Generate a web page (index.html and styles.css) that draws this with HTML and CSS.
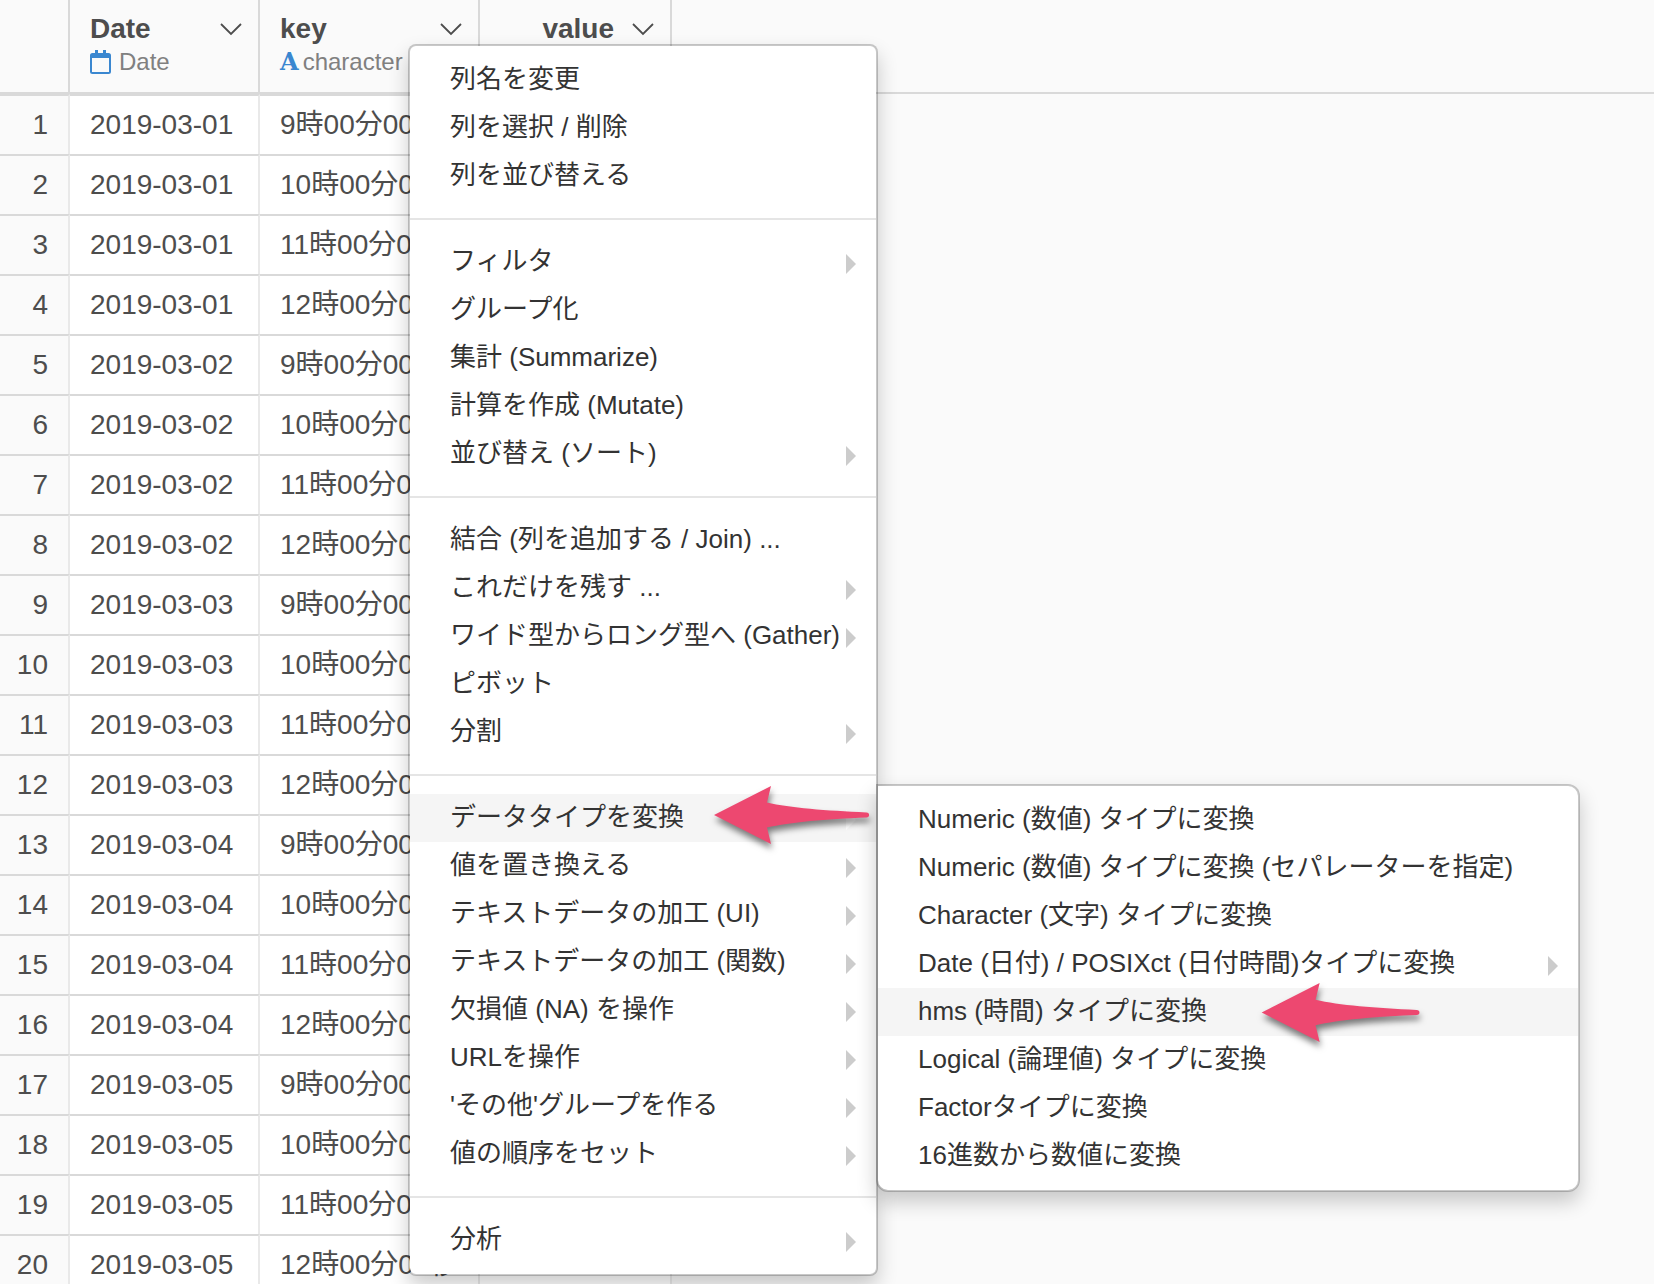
FILE: index.html
```html
<!DOCTYPE html>
<html lang="ja">
<head>
<meta charset="utf-8">
<title>データテーブル</title>
<link rel="stylesheet" href="styles.css">
</head>
<body>
<svg class="defs" aria-hidden="true">
  <symbol id="chevron" viewBox="0 0 22 14"><path d="M1 2 L11 12 L21 2" fill="none" stroke="currentColor" stroke-width="1.8"/></symbol>
  <symbol id="pointer" viewBox="0 0 156 58"><path d="M0 29 L57 0 L53 16.5 C76 22 112 24.500 152.500 26.500 C156 26.700 156 31.200 152.500 31.400 C112 33 76 36 53 41.500 L57 58 Z" fill="#ed4870"/></symbol>
</svg>
<main class="viewer">
  <table class="grid">
    <colgroup><col class="col-index"><col class="col-date"><col class="col-key"><col class="col-value"><col></colgroup>
    <thead>
      <tr>
        <th></th>
        <th>
          <div class="head"><span>Date</span><button class="toggle" type="button" aria-label="Date"><svg><use href="#chevron"/></svg></button></div>
          <div class="type"><svg class="type-date" viewBox="0 0 21 24"><path fill="#3a87d0" fill-rule="evenodd" d="M5 0h3v3h5V0h3v3h2.500a2.500 2.500 0 0 1 2.500 2.500v16a2.500 2.500 0 0 1-2.500 2.500h-16A2.500 2.500 0 0 1 0 21.500v-16A2.500 2.500 0 0 1 2.500 3H5zM2 8v14h17V8z"/></svg><span>Date</span></div>
        </th>
        <th>
          <div class="head"><span>key</span><button class="toggle" type="button" aria-label="key"><svg><use href="#chevron"/></svg></button></div>
          <div class="type type-close"><span class="type-char">A</span><span>character</span></div>
        </th>
        <th>
          <div class="head head-end"><span>value</span><button class="toggle" type="button" aria-label="value"><svg><use href="#chevron"/></svg></button></div>
        </th>
        <th class="rest"></th>
      </tr>
    </thead>
    <tbody>
      <tr><td>1</td><td>2019-03-01</td><td>9時00分00秒</td><td></td></tr>
      <tr><td>2</td><td>2019-03-01</td><td>10時00分00秒</td><td></td></tr>
      <tr><td>3</td><td>2019-03-01</td><td>11時00分00秒</td><td></td></tr>
      <tr><td>4</td><td>2019-03-01</td><td>12時00分00秒</td><td></td></tr>
      <tr><td>5</td><td>2019-03-02</td><td>9時00分00秒</td><td></td></tr>
      <tr><td>6</td><td>2019-03-02</td><td>10時00分00秒</td><td></td></tr>
      <tr><td>7</td><td>2019-03-02</td><td>11時00分00秒</td><td></td></tr>
      <tr><td>8</td><td>2019-03-02</td><td>12時00分00秒</td><td></td></tr>
      <tr><td>9</td><td>2019-03-03</td><td>9時00分00秒</td><td></td></tr>
      <tr><td>10</td><td>2019-03-03</td><td>10時00分00秒</td><td></td></tr>
      <tr><td>11</td><td>2019-03-03</td><td>11時00分00秒</td><td></td></tr>
      <tr><td>12</td><td>2019-03-03</td><td>12時00分00秒</td><td></td></tr>
      <tr><td>13</td><td>2019-03-04</td><td>9時00分00秒</td><td></td></tr>
      <tr><td>14</td><td>2019-03-04</td><td>10時00分00秒</td><td></td></tr>
      <tr><td>15</td><td>2019-03-04</td><td>11時00分00秒</td><td></td></tr>
      <tr><td>16</td><td>2019-03-04</td><td>12時00分00秒</td><td></td></tr>
      <tr><td>17</td><td>2019-03-05</td><td>9時00分00秒</td><td></td></tr>
      <tr><td>18</td><td>2019-03-05</td><td>10時00分00秒</td><td></td></tr>
      <tr><td>19</td><td>2019-03-05</td><td>11時00分00秒</td><td></td></tr>
      <tr><td>20</td><td>2019-03-05</td><td>12時00分00秒</td><td></td></tr>
    </tbody>
  </table>

  <nav class="menu menu-main">
    <ul>
      <li><button type="button">列名を変更</button></li>
      <li><button type="button">列を選択 / 削除</button></li>
      <li><button type="button">列を並び替える</button></li>
    </ul>
    <hr>
    <ul>
      <li><button type="button" class="more">フィルタ</button></li>
      <li><button type="button">グループ化</button></li>
      <li><button type="button">集計 (Summarize)</button></li>
      <li><button type="button">計算を作成 (Mutate)</button></li>
      <li><button type="button" class="more">並び替え (ソート)</button></li>
    </ul>
    <hr>
    <ul>
      <li><button type="button">結合 (列を追加する / Join) ...</button></li>
      <li><button type="button" class="more">これだけを残す ...</button></li>
      <li><button type="button" class="more">ワイド型からロング型へ (Gather)</button></li>
      <li><button type="button">ピボット</button></li>
      <li><button type="button" class="more">分割</button></li>
    </ul>
    <hr>
    <ul>
      <li class="open">
        <button type="button" class="more active">データタイプを変換</button>
        <div class="menu menu-sub">
          <ul>
            <li><button type="button">Numeric (数値) タイプに変換</button></li>
            <li><button type="button">Numeric (数値) タイプに変換 (セパレーターを指定)</button></li>
            <li><button type="button">Character (文字) タイプに変換</button></li>
            <li><button type="button" class="more">Date (日付) / POSIXct (日付時間)タイプに変換</button></li>
            <li class="open"><button type="button" class="active">hms (時間) タイプに変換</button><svg class="pointer pointer-sub"><use href="#pointer"/></svg></li>
            <li><button type="button">Logical (論理値) タイプに変換</button></li>
            <li><button type="button">Factorタイプに変換</button></li>
            <li><button type="button">16進数から数値に変換</button></li>
          </ul>
        </div>
        <svg class="pointer pointer-main"><use href="#pointer"/></svg>
      </li>
      <li><button type="button" class="more">値を置き換える</button></li>
      <li><button type="button" class="more">テキストデータの加工 (UI)</button></li>
      <li><button type="button" class="more">テキストデータの加工 (関数)</button></li>
      <li><button type="button" class="more">欠損値 (NA) を操作</button></li>
      <li><button type="button" class="more">URLを操作</button></li>
      <li><button type="button" class="more">'その他'グループを作る</button></li>
      <li><button type="button" class="more">値の順序をセット</button></li>
    </ul>
    <hr>
    <ul>
      <li><button type="button" class="more">分析</button></li>
    </ul>
  </nav>
</main>
</body>
</html>
```

FILE: styles.css
```css
* { box-sizing: border-box; }

body {
  margin: 0;
  background: #fafafa;
  color: #4d4d4d;
  font-family: "Liberation Sans", "Noto Sans CJK JP", sans-serif;
}

button {
  border: 0;
  background: none;
  color: inherit;
  font: inherit;
  cursor: pointer;
}

.defs {
  position: absolute;
  width: 0;
  height: 0;
}

.viewer {
  position: relative;
  height: 100vh;
  overflow: hidden;
}

/* Data grid */
.grid {
  width: 100%;
  table-layout: fixed;
  border-collapse: separate;
  border-spacing: 0;
  font-size: 28px;
  line-height: 32px;
}

.col-index { width: 70px; }
.col-date { width: 190px; }
.col-key { width: 220px; }
.col-value { width: 192px; }

.grid th {
  height: 94px;
  padding: 13px 16px 0 20px;
  border-right: 2px solid #d9d9d9;
  border-bottom: 2px solid #d9d9d9;
  text-align: left;
  vertical-align: top;
}

.grid th.rest { border-right: 0; }

.grid td {
  height: 60px;
  padding: 0 20px;
  border-top: 2px solid #d9d9d9;
  border-right: 2px solid #e9e9e9;
  background: #fff;
  white-space: nowrap;
}

.grid td:first-child {
  padding: 0 20px 0 0;
  background: #fafafa;
  text-align: right;
}

.head {
  display: flex;
  align-items: center;
  justify-content: space-between;
}

.head-end {
  justify-content: flex-end;
  gap: 18px;
}

.toggle {
  display: flex;
  padding: 0;
}

.toggle svg {
  width: 22px;
  height: 14px;
}

.type {
  display: flex;
  align-items: center;
  gap: 8px;
  height: 34px;
  color: #808080;
  font-size: 24px;
  font-weight: 400;
}

.type-close { gap: 4px; }

.type-date {
  width: 21px;
  height: 24px;
}

.type-char {
  color: #3a87d0;
  font-family: "DejaVu Serif", serif;
  font-weight: 700;
}

/* Drop-down menus */
.menu {
  position: absolute;
  padding: 10px 0;
  border: 2px solid rgba(0, 0, 0, 0.2);
  border-radius: 8px;
  background: #fff;
  background-clip: padding-box;
  box-shadow: 0 10px 20px rgba(0, 0, 0, 0.2);
  color: #333;
  font-size: 26px;
  line-height: 46px;
}

.menu-main {
  top: 44px;
  left: 408px;
  width: 470px;
}

.menu-sub {
  top: -10px;
  left: 100%;
  width: 704px;
  border-radius: 0 12px 12px 12px;
}

.menu ul {
  margin: 0;
  padding: 0;
  list-style: none;
}

.menu hr {
  height: 2px;
  margin: 18px 0;
  border: 0;
  background: #e5e5e5;
}

.menu button {
  display: flex;
  align-items: center;
  justify-content: space-between;
  width: 100%;
  height: 48px;
  padding: 0 20px 2px 40px;
  text-align: left;
  white-space: nowrap;
}

.menu .more::after {
  content: "";
  margin-top: 6px;
  border: 10px solid transparent;
  border-right: 0;
  border-left-color: #ccc;
}

.menu .active { background: #f5f5f5; }

.menu-main .open > .more::after { border-left-color: #fff; }

.open { position: relative; }

/* Callout arrows */
.pointer {
  position: absolute;
  overflow: visible;
  filter: drop-shadow(1px 5px 3px rgba(0, 0, 0, 0.5));
  pointer-events: none;
}

.pointer-main {
  top: -8px;
  left: 304px;
  width: 156px;
  height: 58px;
}

.pointer-sub {
  top: -5px;
  left: 383px;
  width: 160px;
  height: 59px;
}
```
